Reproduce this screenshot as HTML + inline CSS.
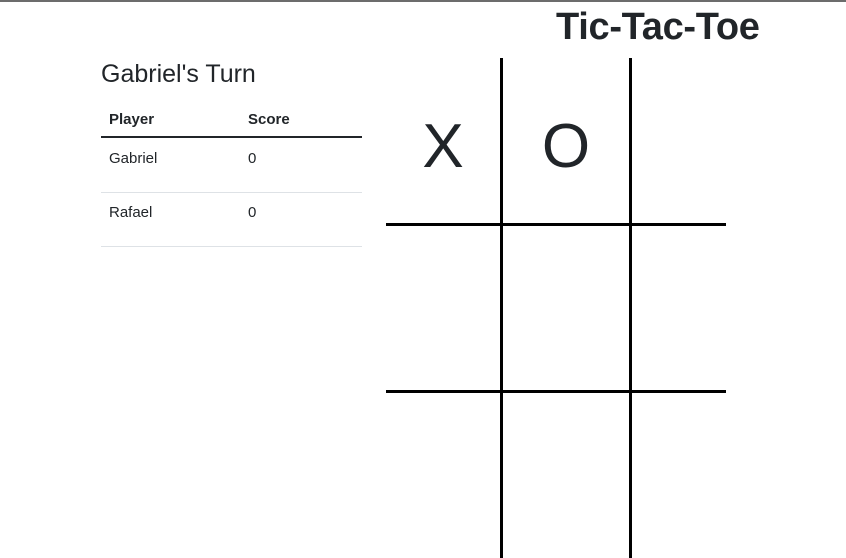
<!DOCTYPE html>
<html><head><style>
body{margin:0;width:846px;height:558px;overflow:hidden;background:#fff;font-family:"Liberation Sans",sans-serif;color:#212529;position:relative}
.top{position:absolute;left:0;top:0;width:846px;height:2px;background:#6c6c6c}
h1{position:absolute;margin:0;left:556px;top:6px;font-size:38px;font-weight:bold;letter-spacing:-0.3px}
h2{position:absolute;margin:0;left:101px;top:60px;font-size:25px;font-weight:500}
.t{position:absolute;left:101px;width:261px;font-size:15px}
.c2{position:absolute;left:147px}
.l{position:absolute;background:#000}
.m{position:absolute;font-size:62px;line-height:1;transform:translate(-50%,-50%)}
</style></head><body>
<div class="top"></div>
<h1>Tic-Tac-Toe</h1>
<h2>Gabriel's Turn</h2>
<div class="t" style="top:111px;font-weight:bold;height:25px;border-bottom:2px solid #212529"><span style="margin-left:8px">Player</span><span class="c2">Score</span></div>
<div class="t" style="top:139px;height:53px;border-bottom:1px solid #dee2e6;line-height:40px"><span style="margin-left:8px">Gabriel</span><span class="c2">0</span></div>
<div class="t" style="top:193px;height:53px;border-bottom:1px solid #dee2e6;line-height:40px"><span style="margin-left:8px">Rafael</span><span class="c2">0</span></div>
<div class="l" style="left:500px;top:58px;width:3px;height:500px"></div>
<div class="l" style="left:629px;top:58px;width:3px;height:500px"></div>
<div class="l" style="left:386px;top:223px;width:340px;height:3px"></div>
<div class="l" style="left:386px;top:390px;width:340px;height:3px"></div>
<div class="m" style="left:443px;top:147px">X</div>
<div class="m" style="left:566px;top:147px">O</div>
</body></html>
